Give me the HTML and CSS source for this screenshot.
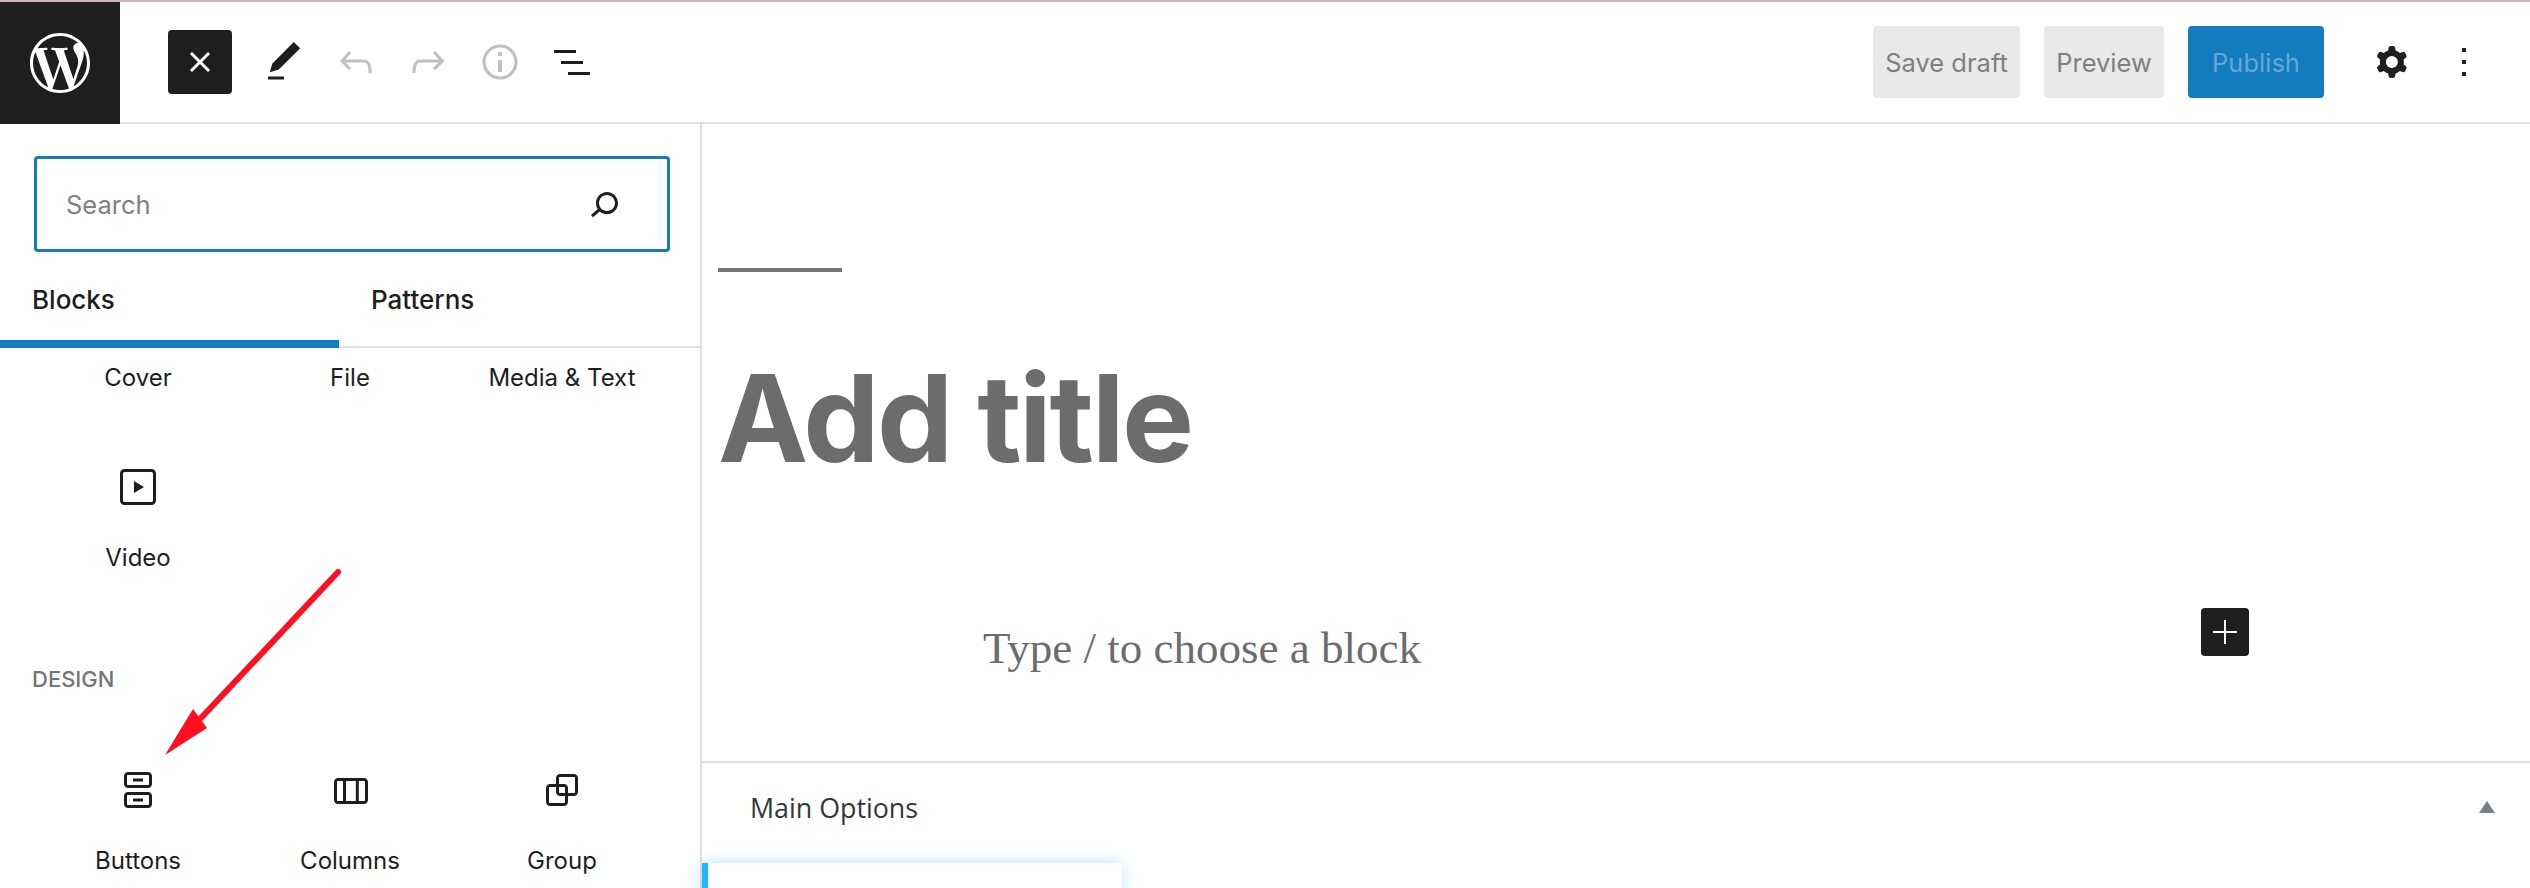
FILE: index.html
```html
<!DOCTYPE html>
<html lang="en">
<head>
    <meta charset="UTF-8">
    <title>Add New Page</title>
    <link rel="stylesheet" href="styles.css">
</head>
<body>
    <div class="page">
        <header class="topbar">
            <a class="wp-logo">
                <svg width="72" height="72" viewBox="0 0 24 24"><path fill="#fff" d="M12.158,12.786L9.46,20.625c0.806,0.237,1.657,0.366,2.54,0.366c1.047,0,2.051-0.181,2.986-0.51c-0.024-0.038-0.046-0.079-0.065-0.124L12.158,12.786z M3.009,12c0,3.559,2.068,6.634,5.067,8.092L3.788,8.341C3.289,9.459,3.009,10.696,3.009,12z M18.069,11.546c0-1.112-0.399-1.881-0.741-2.48c-0.456-0.741-0.883-1.368-0.883-2.109c0-0.826,0.627-1.596,1.51-1.596c0.04,0,0.078,0.005,0.116,0.007C16.472,3.904,14.34,3.009,12,3.009c-3.141,0-5.904,1.612-7.512,4.052c0.211,0.007,0.41,0.011,0.579,0.011c0.94,0,2.396-0.114,2.396-0.114C7.947,6.93,8.004,7.642,7.52,7.699c0,0-0.487,0.057-1.029,0.085l3.274,9.739l1.968-5.901l-1.401-3.838C9.848,7.756,9.389,7.699,9.389,7.699C8.904,7.67,8.961,6.93,9.446,6.958c0,0,1.484,0.114,2.368,0.114c0.94,0,2.397-0.114,2.397-0.114c0.485-0.028,0.542,0.684,0.057,0.741c0,0-0.488,0.057-1.029,0.085l3.249,9.665l0.897-2.996C17.841,13.284,18.069,12.316,18.069,11.546z M19.889,7.686c0.039,0.286,0.06,0.593,0.06,0.924c0,0.912-0.171,1.938-0.684,3.22l-2.746,7.94c2.673-1.558,4.47-4.454,4.47-7.771C20.991,10.436,20.591,8.967,19.889,7.686z M12,22C6.486,22,2,17.514,2,12C2,6.486,6.486,2,12,2c5.514,0,10,4.486,10,10C22,17.514,17.514,22,12,22z"/></svg>
            </a>
            <div class="tools">
                <button class="close-btn">
                    <svg width="24" height="24" viewBox="0 0 24 24"><path d="M3 3l18 18M21 3L3 21" stroke="#fff" stroke-width="3" fill="none"/></svg>
                </button>
                <div class="tool-icons">
                    <svg class="icon" viewBox="0 0 24 24"><path d="M20.1 5.1L16.9 2 6.2 12.7l-1.3 4.4 4.5-1.3L20.1 5.1zM4 20.8h8v-1.5H4v1.5z"/></svg>
                    <svg class="icon off" viewBox="0 0 24 24"><path d="M18.3 11.7c-.6-.6-1.4-.9-2.3-.9H6.7l2.9-3.3-1.1-1-4.5 5L8.5 16l1-1-2.7-2.7H16c.5 0 .9.2 1.3.5 1 1 1 3.4 1 4.5v.3h1.5v-.2c0-1.5 0-4.3-1.5-5.7z"/></svg>
                    <svg class="icon off" viewBox="0 0 24 24"><path d="M15.6 6.5l-1.1 1 2.9 3.3H8c-.9 0-1.7.3-2.3.9-1.4 1.5-1.4 4.2-1.4 5.6v.2h1.5v-.3c0-1.1 0-3.5 1-4.5.3-.3.7-.5 1.3-.5h9.2L14.5 15l1.1 1.1 4.6-4.6-4.6-5z"/></svg>
                    <svg class="icon off" viewBox="0 0 24 24"><path d="M12 3.2c-4.8 0-8.8 3.9-8.8 8.8 0 4.8 3.9 8.8 8.8 8.8 4.8 0 8.8-3.9 8.8-8.8 0-4.8-4-8.8-8.8-8.8zm0 16c-4 0-7.2-3.3-7.2-7.2C4.8 8 8 4.8 12 4.8s7.2 3.3 7.2 7.2c0 4-3.2 7.2-7.2 7.2zM11 17h2v-6h-2v6zm0-8h2V7h-2v2z"/></svg>
                    <svg class="icon" viewBox="0 0 24 24"><path d="M3 6h11v1.5H3V6zm3.5 5.5h11V13h-11v-1.5zM21 17H10v1.5h11V17z"/></svg>
                </div>
            </div>
            <div class="actions">
                <button class="btn">Save draft</button>
                <button class="btn preview">Preview</button>
                <button class="btn publish">Publish</button>
                <svg class="icon settings" viewBox="0 0 24 24"><path fill-rule="evenodd" d="M10.289 4.836A1 1 0 0 1 11.275 4h1.306a1 1 0 0 1 .987.836l.244 1.466c.787.26 1.503.679 2.108 1.218l1.393-.522a1 1 0 0 1 1.216.437l.653 1.13a1 1 0 0 1-.23 1.273l-1.148.944a6.025 6.025 0 0 1 0 2.435l1.149.946a1 1 0 0 1 .23 1.272l-.653 1.13a1 1 0 0 1-1.216.437l-1.394-.522c-.605.54-1.32.958-2.108 1.218l-.244 1.466a1 1 0 0 1-.987.836h-1.306a1 1 0 0 1-.986-.836l-.244-1.466a5.995 5.995 0 0 1-2.108-1.218l-1.394.522a1 1 0 0 1-1.217-.436l-.653-1.131a1 1 0 0 1 .23-1.272l1.149-.946a6.026 6.026 0 0 1 0-2.435l-1.148-.944a1 1 0 0 1-.23-1.272l.653-1.131a1 1 0 0 1 1.217-.437l1.393.522a5.994 5.994 0 0 1 2.108-1.218l.244-1.466ZM14.929 12a3 3 0 1 1-6 0 3 3 0 0 1 6 0Z"/></svg>
                <svg class="icon" viewBox="0 0 24 24"><path d="M13 19h-2v-2h2v2zm0-6h-2v-2h2v2zm0-6h-2V5h2v2z"/></svg>
            </div>
        </header>

        <div class="workspace">
            <aside class="inserter">
                <div class="search">
                    <span class="search-text">Search</span>
                    <svg class="icon search-icon" viewBox="0 0 24 24"><path d="M13.5 6C10.5 6 8 8.5 8 11.5c0 1.1.3 2.1.9 3l-3.4 3 1 1.1 3.4-2.9c1 .9 2.2 1.4 3.6 1.4 3 0 5.5-2.5 5.5-5.5C19 8.5 16.5 6 13.5 6zm0 9.5c-2.2 0-4-1.8-4-4s1.8-4 4-4 4 1.8 4 4-1.8 4-4 4z"/></svg>
                </div>
                <div class="tabs">
                    <div class="tab active">Blocks</div>
                    <div class="tab">Patterns</div>
                </div>

                <div class="block-grid first-row">
                    <div class="block-name">Cover</div>
                    <div class="block-name">File</div>
                    <div class="block-name">Media &amp; Text</div>
                </div>
                <div class="block-grid video-row">
                    <div class="block-item">
                        <svg class="icon" viewBox="0 0 24 24"><path d="M18.7 3H5.3C4 3 3 4 3 5.3v13.4C3 20 4 21 5.3 21h13.4c1.3 0 2.3-1 2.3-2.3V5.3C21 4 20 3 18.7 3zm.8 15.7c0 .4-.4.8-.8.8H5.3c-.4 0-.8-.4-.8-.8V5.3c0-.4.4-.8.8-.8h13.4c.4 0 .8.4.8.8v13.4zM10 15l5-3-5-3v6z"/></svg>
                        <div class="block-name">Video</div>
                    </div>
                </div>

                <h2 class="category">DESIGN</h2>
                <div class="block-grid">
                    <div class="block-item">
                        <svg class="icon" viewBox="0 0 24 24"><path d="M17 3H7c-1.1 0-2 .9-2 2v4c0 1.1.9 2 2 2h10c1.1 0 2-.9 2-2V5c0-1.1-.9-2-2-2zm.5 6c0 .3-.2.5-.5.5H7c-.3 0-.5-.2-.5-.5V5c0-.3.2-.5.5-.5h10c.3 0 .5.2.5.5v4zm-8-1.2h5V6.2h-5v1.6zM17 13H7c-1.1 0-2 .9-2 2v4c0 1.1.9 2 2 2h10c1.1 0 2-.9 2-2v-4c0-1.1-.9-2-2-2zm.5 6c0 .3-.2.5-.5.5H7c-.3 0-.5-.2-.5-.5v-4c0-.3.2-.5.5-.5h10c.3 0 .5.2.5.5v4zm-8-1.2h5v-1.6h-5v1.6z"/></svg>
                        <div class="block-name">Buttons</div>
                    </div>
                    <div class="block-item">
                        <svg class="icon" viewBox="0 0 24 24"><path d="M19 6H6c-1.1 0-2 .9-2 2v9c0 1.1.9 2 2 2h13c1.1 0 2-.9 2-2V8c0-1.1-.9-2-2-2zm-4.1 1.5v10H10v-10h4.9zM5.5 17V8c0-.3.2-.5.5-.5h2.5v10H6c-.3 0-.5-.2-.5-.5zm14 0c0 .3-.2.5-.5.5h-2.6v-10H19c.3 0 .5.2.5.5v9z"/></svg>
                        <div class="block-name">Columns</div>
                    </div>
                    <div class="block-item">
                        <svg class="icon" viewBox="0 0 24 24"><path d="M18 4h-7c-1.1 0-2 .9-2 2v3H6c-1.1 0-2 .9-2 2v7c0 1.1.9 2 2 2h7c1.1 0 2-.9 2-2v-3h3c1.1 0 2-.9 2-2V6c0-1.1-.9-2-2-2zm-4.5 14c0 .3-.2.5-.5.5H6c-.3 0-.5-.2-.5-.5v-7c0-.3.2-.5.5-.5h3V13c0 1.1.9 2 2 2h2.5v3zm0-4.5H11c-.3 0-.5-.2-.5-.5v-2.5H13c.3 0 .5.2.5.5v2.5zm5-.5c0 .3-.2.5-.5.5h-3V11c0-1.1-.9-2-2-2h-2.5V6c0-.3.2-.5.5-.5h7c.3 0 .5.2.5.5v7z"/></svg>
                        <div class="block-name">Group</div>
                    </div>
                </div>
            </aside>

            <main class="editor">
                <div class="canvas">
                    <div class="separator"></div>
                    <h1 class="post-title">Add title</h1>
                    <div class="empty-block">
                        <p class="placeholder">Type / to choose a block</p>
                        <button class="add-block">
                            <svg width="24" height="24" viewBox="0 0 24 24"><path d="M0 11h24v2H0zM11 0h2v24h-2z" fill="#fff"/></svg>
                        </button>
                    </div>
                </div>
                <section class="meta-box">
                    <div class="meta-head">
                        <span class="meta-title">Main Options</span>
                        <span class="meta-toggle"></span>
                    </div>
                    <div class="meta-card"></div>
                </section>
            </main>
        </div>

        <!-- annotation drawn over the screenshot -->
        <svg class="arrow" width="185" height="195" viewBox="0 0 185 195">
            <path d="M178 5L41 151" stroke="#fe1020" stroke-width="6" stroke-linecap="round" fill="none"/>
            <path d="M5 188L33 142L47 161Z" fill="#fe1020"/>
        </svg>
    </div>
</body>
</html>
```

FILE: styles.css
```css
* {
    box-sizing: border-box;
}
html, body {
    margin: 0;
    height: 100%;
    overflow: hidden;
    background: #fff;
}
body {
    font-family: Inter, 'Liberation Sans', sans-serif;
    color: #1e1e1e;
}
button {
    font-family: inherit;
    border: 0;
    padding: 0;
}
.page {
    position: relative;
    height: 888px;
    display: flex;
    flex-direction: column;
    border-top: 2px solid #cdb3bd;
}
.icon {
    display: block;
    width: 48px;
    height: 48px;
    flex: none;
    fill: #1e1e1e;
}
.icon.off {
    fill: #c0c0c0;
}

/* top bar */
.topbar {
    height: 122px;
    flex: none;
    display: flex;
    align-items: flex-start;
    border-bottom: 2px solid #e0e0e0;
}
.wp-logo {
    width: 120px;
    height: 122px;
    background: #1e1e1e;
    display: flex;
    align-items: center;
    justify-content: center;
}
.tools {
    display: flex;
    align-items: center;
    margin-left: 48px;
    margin-top: 28px;
    height: 64px;
}
.close-btn {
    width: 64px;
    height: 64px;
    background: #1e1e1e;
    border-radius: 4px;
    display: flex;
    align-items: center;
    justify-content: center;
}
.tool-icons {
    display: flex;
    gap: 24px;
    margin-left: 28px;
}
.actions {
    margin-left: auto;
    margin-top: 24px;
    margin-right: 42px;
    display: flex;
    align-items: center;
}
.btn {
    height: 72px;
    width: 147px;
    padding-top: 1px;
    background: #e9e9e9;
    color: #808080;
    font-size: 25.5px;
    border-radius: 4px;
}
.btn.preview {
    width: 120px;
    margin-left: 24px;
}
.btn.publish {
    width: 136px;
    margin-left: 24px;
    background: #137cbd;
    color: #64a8d6;
}
.settings {
    margin-left: 44px;
    margin-right: 24px;
}

/* layout below the bar */
.workspace {
    flex: 1;
    min-height: 0;
    display: grid;
    grid-template-columns: 702px 1fr;
}
.inserter {
    border-right: 2px solid #e0e0e0;
    overflow: hidden;
}
.search {
    margin: 32px 30px 0 34px;
    height: 96px;
    border: 3px solid #137cbd;
    border-radius: 4px;
    display: flex;
    align-items: center;
    justify-content: space-between;
    padding: 0 39px 0 29px;
}
.search-text {
    font-size: 25.5px;
    color: #808080;
}
.tabs {
    height: 96px;
    display: flex;
    border-bottom: 2px solid #e0e0e0;
}
.tab {
    width: 339px;
    height: 94px;
    padding: 0 32px;
    display: flex;
    align-items: center;
    font-size: 26px;
    font-weight: 500;
}
.tab.active {
    height: 96px;
    padding-top: 6px;
    border-bottom: 8px solid #137cbd;
}

/* block list */
.block-grid {
    display: grid;
    grid-template-columns: repeat(3, 212px);
    padding-left: 32px;
}
.first-row {
    padding-top: 14px;
}
.video-row {
    padding-top: 69px;
}
.block-item {
    display: flex;
    flex-direction: column;
    align-items: center;
}
.block-item .block-name {
    margin-top: 31px;
}
.block-name {
    font-size: 24px;
    line-height: 32px;
    text-align: center;
}
.category {
    margin: 91px 0 73px 32px;
    font-size: 22px;
    line-height: 28px;
    font-weight: 500;
    color: #757575;
}

/* editor */
.editor {
    display: flex;
    flex-direction: column;
    min-width: 0;
}
.canvas {
    height: 637px;
    flex: none;
    padding-left: 16px;
}
.separator {
    width: 124px;
    height: 4px;
    margin-top: 144px;
    background: #757575;
}
.post-title {
    margin: 73px 0 0;
    font-size: 121px;
    line-height: 146px;
    font-weight: 700;
    letter-spacing: -2.4px;
    color: #6c6c6c;
}
.empty-block {
    display: flex;
    align-items: flex-start;
    margin-top: 117px;
    padding-left: 265px;
}
.placeholder {
    margin: 14px 0 0;
    width: 1218px;
    font-family: 'Liberation Serif', serif;
    font-size: 45px;
    line-height: 52px;
    color: #6c6c6c;
}
.add-block {
    width: 48px;
    height: 48px;
    flex: none;
    background: #1e1e1e;
    border-radius: 4px;
    display: flex;
    align-items: center;
    justify-content: center;
}
.meta-box {
    flex: 1;
    min-height: 0;
    border-top: 2px solid #e0e0e0;
}
.meta-head {
    height: 100px;
    display: flex;
    align-items: center;
    justify-content: space-between;
    padding: 0 35px 12px 48px;
}
.meta-title {
    font-family: 'Open Sans', sans-serif;
    font-size: 26.8px;
    color: #32373c;
}
.meta-toggle {
    width: 0;
    height: 0;
    border-left: 8px solid transparent;
    border-right: 8px solid transparent;
    border-bottom: 12px solid #7a7f87;
}
.meta-card {
    width: 420px;
    height: 40px;
    background: #fff;
    border-left: 6px solid #1fb6ff;
    box-shadow: 0 0 16px rgba(30, 170, 255, .3);
}

/* red arrow on top */
.arrow {
    position: absolute;
    left: 160px;
    top: 565px;
}
```
